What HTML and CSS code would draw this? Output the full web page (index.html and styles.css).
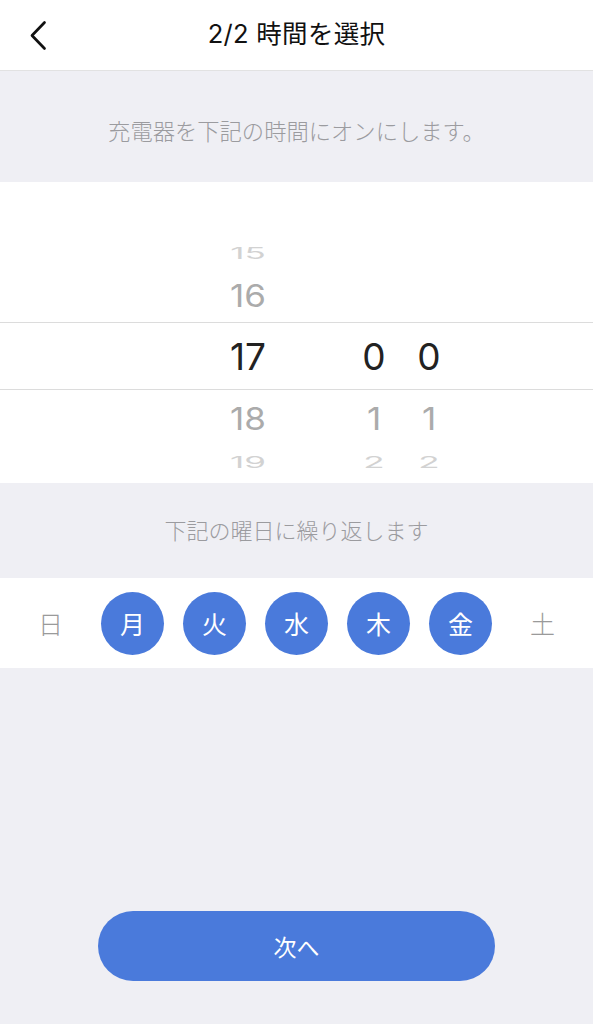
FILE: index.html
```html
<!DOCTYPE html>
<html lang="ja">
<head>
<meta charset="utf-8">
<title>2/2 時間を選択</title>
<link rel="stylesheet" href="styles.css">
</head>
<body>
<div class="screen">
  <header class="nav">
    <button class="back" aria-label="戻る">
      <svg width="40" height="40" viewBox="0 0 40 40"><path d="M24.5 7.5 L12 20.5 L24.5 33.5" fill="none" stroke="#111" stroke-width="2.7" stroke-linecap="round" stroke-linejoin="round"/></svg>
    </button>
    <h1 class="title">2/2 時間を選択</h1>
  </header>

  <section class="note note-top">充電器を下記の時間にオンにします。</section>

  <section class="picker">
    <div class="prow far far-top"><span class="h">15</span><span class="m1"></span><span class="m2"></span></div>
    <div class="prow near near-top"><span class="h">16</span><span class="m1"></span><span class="m2"></span></div>
    <div class="prow sel"><span class="h">17</span><span class="m1">0</span><span class="m2">0</span></div>
    <div class="prow near near-bot"><span class="h">18</span><span class="m1">1</span><span class="m2">1</span></div>
    <div class="prow far far-bot"><span class="h">19</span><span class="m1">2</span><span class="m2">2</span></div>
  </section>

  <section class="note note-mid">下記の曜日に繰り返します</section>

  <section class="days">
    <span class="day">日</span>
    <span class="day on">月</span>
    <span class="day on">火</span>
    <span class="day on">水</span>
    <span class="day on">木</span>
    <span class="day on">金</span>
    <span class="day">土</span>
  </section>

  <footer class="bottom">
    <button class="next">次へ</button>
  </footer>
</div>
</body>
</html>
```

FILE: styles.css
```css
* { box-sizing: border-box; }
html, body { margin: 0; padding: 0; }
body {
  background: #efeff4;
  font-family: "Inter", "Noto Sans CJK JP", sans-serif;
  color: #111;
}
.screen {
  width: 593px;
  height: 1024px;
  display: flex;
  flex-direction: column;
  background: #efeff4;
}
.nav {
  height: 71px;
  background: #fff;
  border-bottom: 1px solid #e2e2e2;
  display: flex;
  align-items: center;
  justify-content: center;
  position: relative;
}
.back {
  position: absolute;
  left: 20px;
  top: 15px;
  width: 40px;
  height: 40px;
  padding: 0;
  border: 0;
  background: none;
  display: flex;
}
.title {
  margin: 0;
  font-size: 25.5px;
  font-weight: 400;
  letter-spacing: 0.3px;
  color: #111;
  font-family: "Inter", "Noto Sans CJK JP", sans-serif;
  line-height: 1;
  padding-bottom: 2px;
}
.note {
  display: flex;
  align-items: center;
  justify-content: center;
  font-family: "Noto Sans CJK JP", sans-serif;
  color: #9b9b9f;
  font-weight: 300;
}
.note-top { height: 111px; padding-top: 6px; font-size: 22.3px; }
.note-mid { height: 95px; padding-bottom: 4px; font-size: 22px; }

.picker {
  height: 301px;
  background: #fff;
  display: flex;
  flex-direction: column;
  padding-top: 56px;
  font-family: "Inter", "Liberation Sans", sans-serif;
}
.prow {
  display: flex;
  align-items: center;
  padding-left: 208px;
  font-size: 35px;
  line-height: 1;
}
.prow span { display: block; text-align: center; }
.prow .h { width: 80px; }
.prow .m1 { width: 46px; margin-left: 63px; }
.prow .m2 { width: 46px; margin-left: 9px; }

.far { color: #d2d2d2; }
.far span { transform: scaleY(0.45); }
.far-top { align-items: flex-end; height: 33px; }
.far-bot { align-items: flex-start; height: 34px; }
.near { color: #ababab; }
.near span { transform: scaleY(0.9); }
.near-top { height: 55px; padding-top: 2px; margin-top: -4px; }
.near-bot { height: 55px; padding-top: 2px; }
.sel {
  height: 68px;
  border-top: 1.5px solid #dcdcdc;
  border-bottom: 1.5px solid #dcdcdc;
  color: #222;
  font-size: 37px;
}

.days {
  height: 90px;
  background: #fff;
  display: flex;
  align-items: center;
  justify-content: center;
  gap: 19px;
}
.day {
  width: 63px;
  height: 63px;
  border-radius: 50%;
  display: flex;
  align-items: center;
  justify-content: center;
  font-family: "Noto Sans CJK JP", sans-serif;
  font-size: 25px;
  font-weight: 300;
  color: #9a9a9a;
}
.day.on {
  background: #4a7adb;
  color: #fff;
  font-weight: 400;
}

.bottom {
  flex: 1;
  display: flex;
  align-items: flex-end;
  justify-content: center;
  padding-bottom: 43px;
}
.next {
  width: 397px;
  height: 70px;
  border: 0;
  border-radius: 35px;
  background: #4a7adb;
  color: #fff;
  font-family: "Noto Sans CJK JP", sans-serif;
  font-size: 23px;
  font-weight: 400;
  padding: 0;
}
```
